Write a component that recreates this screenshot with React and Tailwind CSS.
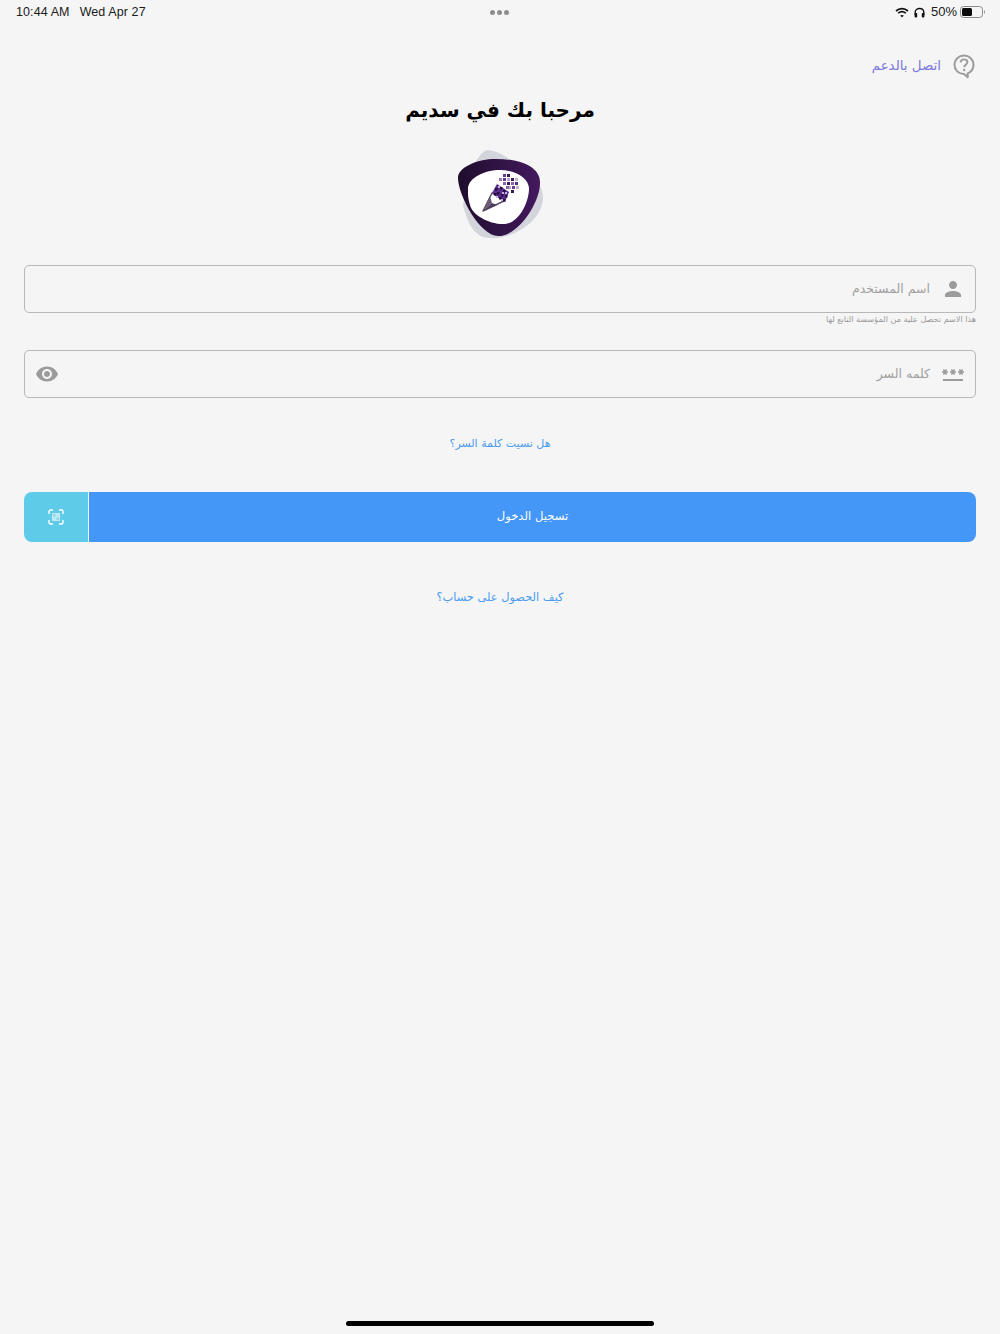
import React from "react";
import { MdPerson, MdVisibility, MdPassword } from "react-icons/md";

const sans = "font-['Liberation_Sans','DejaVu_Sans',sans-serif]";
const arabic = "font-['DejaVu_Sans','Noto_Sans',sans-serif]";

function Wifi() {
  return (
    <svg width="14" height="11" viewBox="0 0 14 11" fill="none" stroke="#111" strokeWidth="1.7">
      <path d="M1 4 C4.4 .9 9.6 .9 13 4" />
      <path d="M3.2 6.2 C5.4 4.3 8.6 4.3 10.8 6.2" />
      <path d="M7 10.6 L5.2 8.5 C6.2 7.7 7.8 7.7 8.8 8.5 Z" fill="#111" stroke="none" />
    </svg>
  );
}

function Headphones() {
  return (
    <svg width="11" height="11" viewBox="0 0 11 11" fill="none">
      <path d="M1.2 8 V5.4 C1.2 .1 9.8 .1 9.8 5.4 V8" stroke="#111" strokeWidth="1.4" />
      <rect x="0.6" y="6" width="2.6" height="4.6" rx="1" fill="#111" />
      <rect x="7.8" y="6" width="2.6" height="4.6" rx="1" fill="#111" />
    </svg>
  );
}

function Battery() {
  return (
    <svg width="26" height="12" viewBox="0 0 26 12">
      <rect x="0.5" y="0.5" width="22" height="11" rx="3" fill="none" stroke="#8a8a8a" />
      <rect x="2" y="2" width="10" height="8" rx="1.5" fill="#0b0b0b" />
      <path d="M24 4 C25.2 4.5 25.2 7.5 24 8 Z" fill="#8a8a8a" />
    </svg>
  );
}

function HelpIcon() {
  return (
    <svg width="22" height="25" viewBox="0 0 22 25" fill="none">
      <path d="M11 1.5 C5.6 1.5 1.5 5.7 1.5 10.8 C1.5 16 5.6 20 11 20 L14.8 23.2 L14.6 19.4 C18 18 20.5 14.8 20.5 10.8 C20.5 5.7 16.4 1.5 11 1.5 Z" stroke="#9b9b9b" strokeWidth="2" strokeLinejoin="round" />
      <path d="M7.6 8.4 C7.8 6.4 9.2 5.4 11 5.4 C13 5.4 14.4 6.6 14.4 8.3 C14.4 10.6 11.2 10.8 11.2 13.2" stroke="#9b9b9b" strokeWidth="1.9" />
      <circle cx="11.2" cy="16" r="1.2" fill="#9b9b9b" />
    </svg>
  );
}

const sparse = [
  [503, 174, "#6a3d94"], [507, 174, "#3a1c55"],
  [499, 178, "#9a7ab8"], [503, 178, "#6a3d94"], [507, 178, "#b9a3cc"], [511, 178, "#3a1c55"], [515, 178, "#c3b4d0"],
  [503, 182, "#8a63ab"], [507, 182, "#3a1c55"], [511, 182, "#8a63ab"], [515, 182, "#5c2d91"],
  [508, 186, "#b9a3cc"], [512, 186, "#6a3d94"], [516, 186, "#c3b4d0"], [511, 190, "#3a1c55"], [506, 186, "#8a63ab"],
];
const dark = [
  [495, 188], [500, 187], [503, 190], [497, 192], [501, 194], [494, 193], [505, 195], [499, 197], [503, 199],
];
const light = [[498, 186], [502, 192], [496, 196], [505, 192], [501, 199]];

function Logo() {
  return (
    <svg width="100" height="100" viewBox="450 145 100 100" className="block">
      <defs>
        <linearGradient id="ring" x1="0" y1="0" x2="1" y2="0">
          <stop offset="0" stopColor="#1e0d2c" />
          <stop offset="1" stopColor="#44195f" />
        </linearGradient>
      </defs>
      <path d="M487 150 C500 150 520 165 536 181 C546 191 545 205 535 218 C525 230 505 240 490 238 C475 238 468 225 463 205 C470 175 475 155 487 150 Z" fill="#d4d5dc" />
      <path d="M458 178 C458 168 475 160 492 159 C515 158 540 165 540 182 C541 200 520 236 498 236 C480 236 458 195 458 178 Z" fill="url(#ring)" />
      <path d="M468 190 C467 178 485 170 500 170 C515 170 530 178 529 190 C528 205 518 223 505 224 C490 225 472 215 470 205 C468 198 468 195 468 190 Z" fill="#fff" />
      <path d="M483 211 L492 193 L504 201 Z" fill="#fff" stroke="#5a4a68" strokeWidth="1.4" strokeLinejoin="round" />
      <path d="M483 211 L490 196 L492 203 Z" fill="#6a5a78" />
      <path d="M483 211 L492 203 L497 205 Z" fill="#4d3d5c" />
      <path d="M497 184 L509 192 L505 202 L492 193 Z" fill="#5c2d91" />
      {sparse.map(([x, y, c], i) => (
        <rect key={i} x={x} y={y} width="3" height="3" fill={c} />
      ))}
      {dark.map(([x, y], i) => (
        <rect key={i} x={x} y={y} width="2.5" height="2.5" fill="#26103a" />
      ))}
      {light.map(([x, y], i) => (
        <rect key={i} x={x} y={y} width="2" height="2" fill="#c8b3dc" />
      ))}
    </svg>
  );
}

function FaceScan() {
  return (
    <svg width="16" height="16" viewBox="0 0 16 16" fill="none">
      <path d="M1 5 V2.5 C1 1.6 1.6 1 2.5 1 H5 M11 1 H13.5 C14.4 1 15 1.6 15 2.5 V5 M15 11 V13.5 C15 14.4 14.4 15 13.5 15 H11 M5 15 H2.5 C1.6 15 1 14.4 1 13.5 V11" stroke="#fff" strokeWidth="1.4" />
      <rect x="4" y="4" width="8" height="8" fill="#bfeaf5" />
      <rect x="5" y="5" width="2.5" height="2.5" fill="#8fd3e8" />
      <rect x="8.5" y="8.5" width="2.5" height="2.5" fill="#8fd3e8" />
    </svg>
  );
}

export default function App() {
  return (
    <div className={`flex h-[1334px] w-[1000px] flex-col bg-[#f5f5f5] ${sans}`}>
      <div className="relative flex h-[24px] items-center justify-between pl-[16px] pr-[14px] text-[12.5px] text-[#1a1a1a]">
        <div className="flex gap-[10px] tracking-[0.1px]">
          <span>10:44 AM</span>
          <span>Wed Apr 27</span>
        </div>
        <div className="absolute left-[490px] top-[10px] flex gap-[2px]">
          <span className="h-[5px] w-[5px] rounded-full bg-[#8e8e8e]" />
          <span className="h-[5px] w-[5px] rounded-full bg-[#8e8e8e]" />
          <span className="h-[5px] w-[5px] rounded-full bg-[#8e8e8e]" />
        </div>
        <div className="flex items-center">
          <Wifi />
          <span className="ml-[5px]"><Headphones /></span>
          <span className="ml-[6px] text-[13px]">50%</span>
          <span className="ml-[3px]"><Battery /></span>
        </div>
      </div>

      <div dir="rtl" className={`mt-[27px] flex h-[30px] items-center gap-[12px] px-[25px] ${arabic}`}>
        <HelpIcon />
        <span className="text-[13.4px] text-[#7b78e0]">اتصل بالدعم</span>
      </div>

      <h1 dir="rtl" className={`mt-[11px] h-[36px] text-center text-[20px] font-bold leading-[36px] text-black ${arabic}`}>مرحبا بك في سديم</h1>

      <div className="mt-[17px] flex justify-center">
        <Logo />
      </div>

      <div className="mt-[20px] px-[24px]" dir="rtl">
        <div className="flex h-[48px] items-center gap-[11px] rounded-[5px] border-[1.5px] border-[#b8b8b8] px-[10px]">
          <MdPerson size={24} color="#9b9b9b" />
          <span className={`text-[12.5px] text-[#a0a0a0] ${arabic}`}>اسم المستخدم</span>
        </div>
        <p className={`h-[12px] text-[8.1px] leading-[12px] text-[#9a9a9a] ${arabic}`}>هذا الاسم تحصل علية من المؤسسة التابع لها</p>

        <div className="mt-[25px] flex h-[48px] items-center justify-between rounded-[5px] border-[1.5px] border-[#b8b8b8] px-[10px]">
          <div className="flex items-center gap-[11px]">
            <MdPassword size={24} color="#9b9b9b" />
            <span className={`text-[12.5px] text-[#a0a0a0] ${arabic}`}>كلمه السر</span>
          </div>
          <MdVisibility size={24} color="#9b9b9b" />
        </div>
      </div>

      <a dir="rtl" className={`mt-[36px] block h-[20px] text-center text-[11px] leading-[20px] text-[#4a9bf0] ${arabic}`}>هل نسيت كلمة السر؟</a>

      <div className="mx-[24px] mt-[38px] flex h-[50px] overflow-hidden rounded-[8px]">
        <div className="flex w-[65px] items-center justify-center border-r border-[#f0f7fb] bg-[#5ecbe9]">
          <FaceScan />
        </div>
        <div className={`flex flex-1 items-center justify-center bg-[#4497f7] text-[11.6px] text-white ${arabic}`} dir="rtl">تسجيل الدخول</div>
      </div>

      <a dir="rtl" className={`mt-[45px] block h-[20px] text-center text-[11.4px] leading-[20px] text-[#4a9bf0] ${arabic}`}>كيف الحصول على حساب؟</a>

      <div className="mx-auto mb-[8px] mt-auto h-[5px] w-[308px] rounded-full bg-black" />
    </div>
  );
}
